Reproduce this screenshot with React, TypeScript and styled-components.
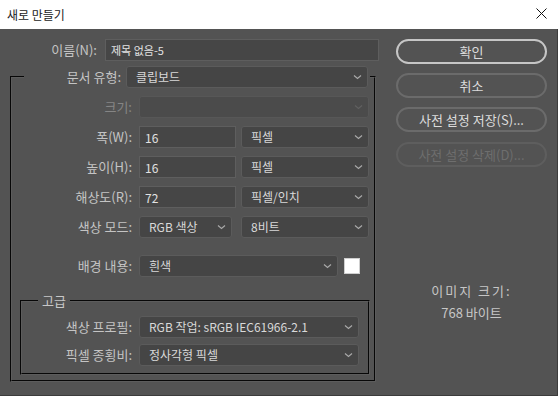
import React from 'react';
import styled, { createGlobalStyle } from 'styled-components';

const GlobalStyle = createGlobalStyle`
  html, body {
    margin: 0;
    padding: 0;
    background: #535353;
  }
  body {
    font-family: 'Noto Sans CJK KR', 'Noto Sans', sans-serif;
  }
  * {
    box-sizing: border-box;
  }
`;

const Chevron = ({ dim }: { dim?: boolean }) => (
  <svg width="9" height="6" viewBox="0 0 9 6">
    <path d="M1 1.5 L4.5 4.5 L8 1.5" fill="none" stroke={dim ? '#606060' : '#a9a9a9'} strokeWidth="1.2" />
  </svg>
);

interface SelectProps {
  width: number;
  value?: string;
  disabled?: boolean;
}

const Select = ({ width, value, disabled }: SelectProps) => (
  <SelectBox $width={width} $disabled={disabled}>
    <span>{value}</span>
    <Chevron dim={disabled} />
  </SelectBox>
);

export default function App() {
  return (
    <>
      <GlobalStyle />
      <Window>
        <TitleBar>
          <Title>새로 만들기</Title>
          <CloseButton aria-label="닫기">
            <svg width="11" height="11" viewBox="0 0 11 11">
              <path d="M0.5 0.5 L10.5 10.5 M10.5 0.5 L0.5 10.5" stroke="#111" strokeWidth="1" />
            </svg>
          </CloseButton>
        </TitleBar>
        <Main>
          <LeftColumn>
            <NameRow>
              <Label $width={87}>이름(N):</Label>
              <TextInput $width={274} $small defaultValue="제목 없음-5" />
            </NameRow>
            <Frame>
              <FrameLegend>
                <Label $width={97}>문서 유형:</Label>
                <Select width={242} value="클립보드" />
              </FrameLegend>
              <FrameBody>
                <Row>
                  <Label $width={120} $disabled>크기:</Label>
                  <Select width={230} disabled />
                </Row>
                <Row>
                  <Label $width={120}>폭(W):</Label>
                  <Controls $gap={5}>
                    <TextInput $width={97} defaultValue="16" />
                    <Select width={128} value="픽셀" />
                  </Controls>
                </Row>
                <Row>
                  <Label $width={120}>높이(H):</Label>
                  <Controls $gap={5}>
                    <TextInput $width={97} defaultValue="16" />
                    <Select width={128} value="픽셀" />
                  </Controls>
                </Row>
                <Row>
                  <Label $width={120}>해상도(R):</Label>
                  <Controls $gap={5}>
                    <TextInput $width={97} defaultValue="72" />
                    <Select width={128} value="픽셀/인치" />
                  </Controls>
                </Row>
                <Row>
                  <Label $width={120}>색상 모드:</Label>
                  <Controls $gap={9}>
                    <Select width={93} value="RGB 색상" />
                    <Select width={128} value="8비트" />
                  </Controls>
                </Row>
                <Row $offset={9}>
                  <Label $width={120}>배경 내용:</Label>
                  <Controls $gap={6}>
                    <Select width={199} value="흰색" />
                    <Swatch />
                  </Controls>
                </Row>
                <Group>
                  <GroupLegend>고급</GroupLegend>
                  <GroupBody>
                    <Row>
                      <Label $width={110}>색상 프로필:</Label>
                      <Select width={220} value="RGB 작업: sRGB IEC61966-2.1" />
                    </Row>
                    <Row>
                      <Label $width={110}>픽셀 종횡비:</Label>
                      <Select width={220} value="정사각형 픽셀" />
                    </Row>
                  </GroupBody>
                </Group>
              </FrameBody>
            </Frame>
          </LeftColumn>
          <RightColumn>
            <PillButton $primary>확인</PillButton>
            <PillButton>취소</PillButton>
            <PillButton>사전 설정 저장(S)...</PillButton>
            <PillButton disabled>사전 설정 삭제(D)...</PillButton>
            <SizeInfo>
              <SizeLabel>이미지 크기:</SizeLabel>
              <SizeValue>768 바이트</SizeValue>
            </SizeInfo>
          </RightColumn>
        </Main>
      </Window>
    </>
  );
}

const Window = styled.div`
  width: 558px;
  height: 396px;
  display: flex;
  flex-direction: column;
  overflow: hidden;
  background: #535353;
`;

const TitleBar = styled.div`
  height: 29px;
  flex-shrink: 0;
  display: flex;
  align-items: center;
  justify-content: space-between;
  padding-left: 7px;
  background: #ffffff;
`;

const Title = styled.div`
  font-size: 12px;
  line-height: 16px;
  color: #1a1a1a;
  margin-top: 1px;
`;

const CloseButton = styled.div`
  width: 11px;
  height: 11px;
  margin-right: 11px;
  margin-top: -2px;
  display: flex;
`;

const Main = styled.div`
  flex: 1;
  display: flex;
  gap: 17px;
  padding: 10px 0 0 10px;
  border-right: 1px solid #3c3c3c;
  border-bottom: 1px solid #3c3c3c;
`;

const LeftColumn = styled.div`
  width: 369px;
  display: flex;
  flex-direction: column;
`;

const NameRow = styled.div`
  display: flex;
  align-items: center;
  gap: 8px;
`;

const Label = styled.div<{ $width: number; $disabled?: boolean }>`
  width: ${({ $width }) => $width}px;
  flex-shrink: 0;
  text-align: right;
  font-size: 13px;
  line-height: 18px;
  color: ${({ $disabled }) => ($disabled ? '#858585' : '#c4c4c4')};
  white-space: nowrap;
`;

const TextInput = styled.input<{ $width: number; $small?: boolean }>`
  width: ${({ $width }) => $width}px;
  height: 22px;
  flex-shrink: 0;
  margin: 0;
  padding: 0 5px;
  border: 1px solid #5e5e5e;
  border-radius: 0;
  background: #464646;
  color: #e2e2e2;
  font-family: inherit;
  font-size: ${({ $small }) => ($small ? '11px' : '12px')};
  outline: none;
`;

const SelectBox = styled.div<{ $width: number; $disabled?: boolean }>`
  width: ${({ $width }) => $width}px;
  height: 22px;
  flex-shrink: 0;
  display: flex;
  align-items: center;
  justify-content: space-between;
  padding: 0 5px 0 9px;
  border: 1px solid ${({ $disabled }) => ($disabled ? '#575757' : '#5b5b5b')};
  border-radius: 3px;
  background: ${({ $disabled }) => ($disabled ? '#4b4b4b' : '#454545')};
  color: #d9d9d9;
  font-size: 12px;
  line-height: 20px;
  white-space: nowrap;
`;

const Frame = styled.fieldset`
  width: 366px;
  min-width: 0;
  margin: 5px 0 0 0;
  padding: 8px 0 0 0;
  border: 2px groove #5c5c5c;
`;

const FrameLegend = styled.legend`
  display: flex;
  align-items: center;
  gap: 5px;
  margin-left: 12px;
  padding: 0 2px 0 0;
`;

const FrameBody = styled.div`
  display: flex;
  flex-direction: column;
  gap: 8px;
`;

const Row = styled.div<{ $offset?: number }>`
  display: flex;
  align-items: center;
  gap: 7px;
  margin-top: ${({ $offset }) => $offset ?? 0}px;
`;

const Controls = styled.div<{ $gap: number }>`
  display: flex;
  align-items: center;
  gap: ${({ $gap }) => $gap}px;
`;

const Swatch = styled.div`
  width: 16px;
  height: 16px;
  background: #ffffff;
  border: 1px solid #cfcfcf;
`;

const Group = styled.fieldset`
  min-width: 0;
  margin: 8px 4px 5px 8px;
  padding: 7px 0 7px 0;
  border: 2px groove #5c5c5c;
`;

const GroupLegend = styled.legend`
  margin-left: 16px;
  padding: 0 4px;
  font-size: 13px;
  line-height: 16px;
  color: #c8c8c8;
`;

const GroupBody = styled.div`
  display: flex;
  flex-direction: column;
  gap: 6px;
`;

const RightColumn = styled.div`
  width: 151px;
  display: flex;
  flex-direction: column;
  gap: 9px;
`;

const PillButton = styled.button<{ $primary?: boolean }>`
  width: 151px;
  height: 25px;
  margin: 0;
  padding: 0;
  border-radius: 13px;
  background: transparent;
  border: 2px solid ${({ $primary }) => ($primary ? '#c6c6c6' : '#6b6b6b')};
  color: #dcdcdc;
  font-family: inherit;
  font-size: 13px;
  line-height: 18px;
  &:disabled {
    border-color: #5e5e5e;
    color: #6e6e6e;
    margin-top: 1px;
  }
`;

const SizeInfo = styled.div`
  margin-top: 104px;
  display: flex;
  flex-direction: column;
  align-items: center;
`;

const SizeLabel = styled.div`
  font-size: 13px;
  line-height: 22px;
  letter-spacing: 2px;
  color: #c6c6c6;
`;

const SizeValue = styled.div`
  font-size: 13px;
  line-height: 22px;
  color: #c6c6c6;
`;
